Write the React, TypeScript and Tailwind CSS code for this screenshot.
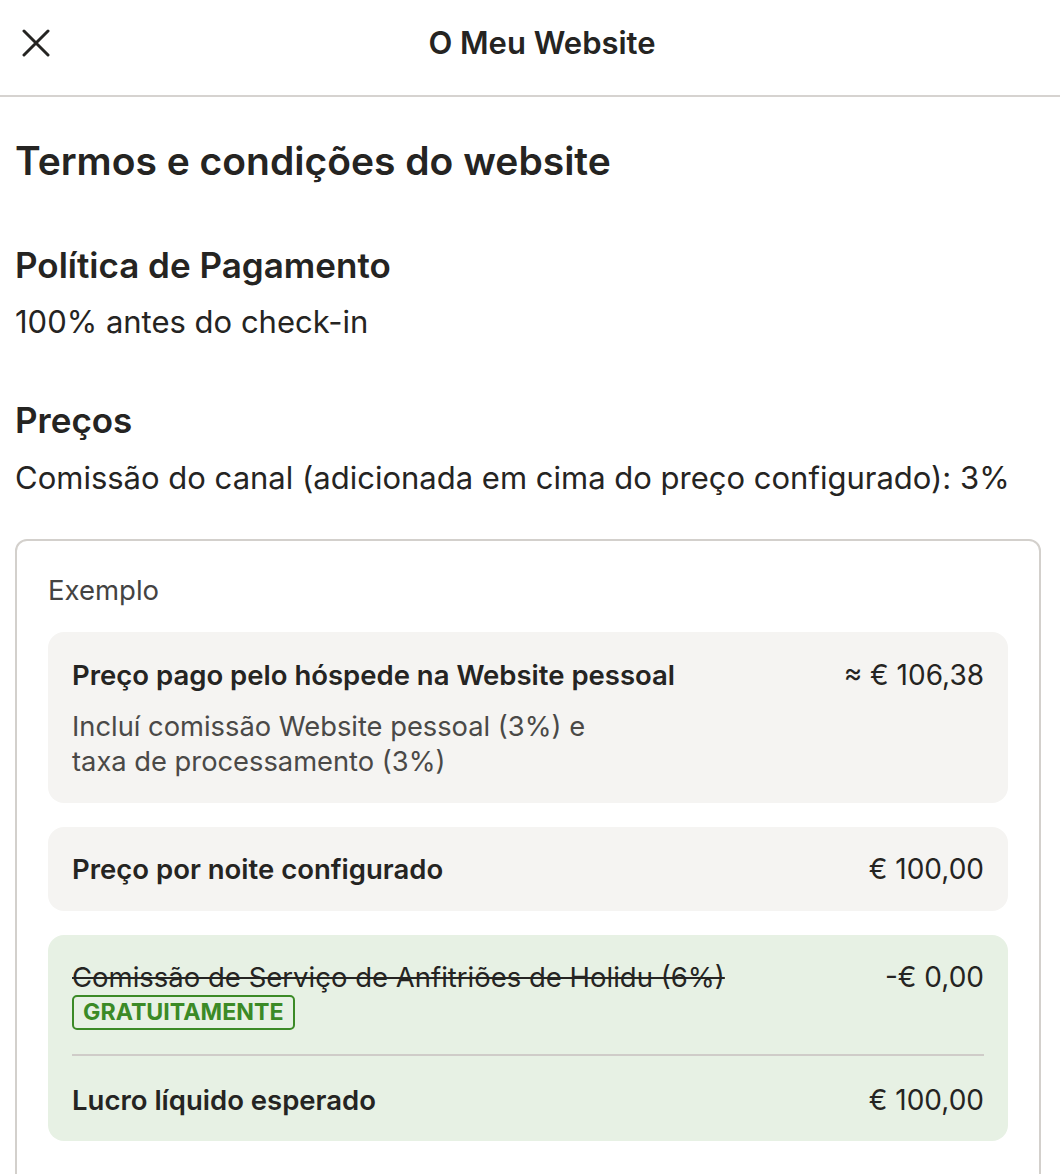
import React from "react";

export default function App() {
  return (
    <div className="min-h-[1174px] bg-white text-[#252422]" style={{ fontFamily: "Inter, 'Noto Sans', sans-serif" }}>
      <header className="flex h-[97px] items-center border-b-2 border-[#d6d3d0] px-[22px] pb-[10px]">
        <svg width="28" height="28" viewBox="0 0 28 28" fill="none" className="shrink-0">
          <path d="M2 2L26 26M26 2L2 26" stroke="#252422" strokeWidth="3" strokeLinecap="round" />
        </svg>
        <div className="flex-1 text-center text-[31px] font-semibold leading-[36px]">O Meu Website</div>
        <div className="w-[4px] shrink-0" />
      </header>

      <main className="pl-[15px] pr-[19px] pt-[42px]">
        <h1 className="text-[39px] font-semibold leading-[44px]">Termos e condições do website</h1>

        <h2 className="mt-[62px] text-[35px] font-semibold leading-[40px]">Política de Pagamento</h2>
        <p className="mt-[17px] text-[31px] leading-[40px]">100% antes do check-in</p>

        <h2 className="mt-[58px] text-[35px] font-semibold leading-[40px]">Preços</h2>
        <p className="mt-[18px] text-[31px] leading-[40px]">Comissão do canal (adicionada em cima do preço configurado): 3%</p>

        <section className="mt-[41px] rounded-[12px] border-2 border-[#d3d0cc] px-[31px] pt-[31px] pb-[48px]">
          <div className="text-[27.5px] leading-[36px] text-[#444342]">Exemplo</div>

          <div className="mt-[24px] rounded-[16px] bg-[#f5f4f2] px-[24px] pt-[25px] pb-[24px]">
            <div className="flex items-start justify-between gap-4">
              <span className="text-[27.5px] font-semibold leading-[36px]">Preço pago pelo hóspede na Website pessoal</span>
              <span className="whitespace-nowrap text-[28px] leading-[36px]">≈ € 106,38</span>
            </div>
            <p className="mt-[16px] text-[27.3px] leading-[35px] text-[#4a4947]">
              Incluí comissão Website pessoal (3%) e
              <br />
              taxa de processamento (3%)
            </p>
          </div>

          <div className="mt-[24px] flex items-center justify-between rounded-[16px] bg-[#f5f4f2] px-[24px] py-[24px]">
            <span className="text-[27.5px] font-semibold leading-[36px]">Preço por noite configurado</span>
            <span className="text-[28px] leading-[36px]">€ 100,00</span>
          </div>

          <div className="mt-[24px] rounded-[16px] bg-[#e7f1e4] px-[24px] pt-[24px] pb-[23px]">
            <div className="flex items-start justify-between gap-4">
              <div className="flex flex-col items-start">
                <span className="text-[27.5px] leading-[36px] line-through">Comissão de Serviço de Anfitriões de Holidu (6%)</span>
                <span className="rounded-[5px] border-2 border-[#3b8a26] px-[9px] text-[23.2px] font-bold leading-[31px] text-[#3b8a26]">GRATUITAMENTE</span>
              </div>
              <span className="whitespace-nowrap text-[28px] leading-[36px]">-€ 0,00</span>
            </div>
            <div className="mt-[24px] h-[2px] bg-[#cfccc8]" />
            <div className="mt-[26px] flex items-center justify-between">
              <span className="text-[27.5px] font-semibold leading-[36px]">Lucro líquido esperado</span>
              <span className="text-[28px] leading-[36px]">€ 100,00</span>
            </div>
          </div>
        </section>
      </main>
    </div>
  );
}
